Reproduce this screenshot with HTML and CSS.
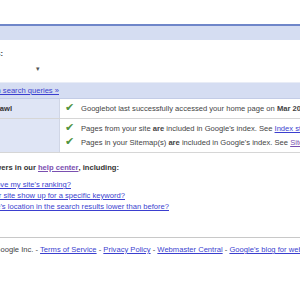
FILE: index.html
```
<!DOCTYPE html>
<html lang="en">
<head>
  <meta charset="UTF-8">
  <title>Webmaster Tools - Overview</title>
  <link rel="stylesheet" href="styles.css">
</head>
<body>

<div class="page">
  <div class="masthead"></div>

  <div class="tabs"></div>

  <div class="queries">
    <div class="clip-end queries-label">Top queries:</div>
    <div class="queries-select"><span class="arrow">&#9662;</span></div>
  </div>

  <div class="queries-bar">
    <div class="clip-end more-link"><a href="#">Drill down in search queries &raquo;</a></div>
  </div>

  <table class="status">
    <tr>
      <td class="status-label"><div class="clip-end">Last crawl</div></td>
      <td class="status-info">
        <div class="check-line"><span class="check">&#10004;</span>Googlebot last successfully accessed your home page on <b>Mar 20, 2008</b>.</div>
      </td>
    </tr>
    <tr>
      <td class="status-label"></td>
      <td class="status-info">
        <div class="check-line"><span class="check">&#10004;</span>Pages from your site <b>are</b> included in Google's index. See <a href="#">Index stats</a>.</div>
        <div class="check-line"><span class="check">&#10004;</span>Pages in your Sitemap(s) <b>are</b> included in Google's index. See <a href="#" class="visited">Sitemaps</a>.</div>
      </td>
    </tr>
  </table>

  <div class="clip-end help-intro">Find answers in our&nbsp;<a href="#" class="visited">help center</a>, including:</div>
  <ul class="faq">
    <li class="clip-end"><a href="#">How can I improve my site's ranking?</a></li>
    <li class="clip-end"><a href="#">Why doesn't your site show up for a specific keyword?</a></li>
    <li class="clip-end"><a href="#">Why is my site's location in the search results lower than before?</a></li>
  </ul>

  <div class="footer">
    &copy;2008 Google Inc. - <a href="#">Terms of Service</a> - <a href="#">Privacy Policy</a> - <a href="#">Webmaster Central</a> - <a href="#">Google's blog for webmasters</a>
  </div>
</div>

</body>
</html>
```

FILE: styles.css
```
body {
  margin: 0;
  background: #fff;
  font-family: 'Liberation Sans', Arial, sans-serif;
  font-size: 7.6px;
  color: #444;
  overflow: hidden;
}

a {
  color: #3b3fcf;
}

a.visited {
  color: #7a4fb0;
}

.page {
  width: 300px;
  overflow: hidden;
}

/* text whose start lies off the left edge: it ends at the box's right side */
.clip-end {
  display: flex;
  justify-content: flex-end;
  white-space: nowrap;
}

.masthead {
  height: 24px;
}

.tabs {
  height: 14px;
  border-top: 2px solid #6f86c9;
  background: #d5ddf2;
}

.queries {
  height: 42px;
  border-bottom: 1px solid #e8ecf6;
}

.queries-label {
  width: 3px;
  padding-top: 9px;
  font-weight: bold;
  color: #333;
}

.queries-select {
  margin: 7px 0 0 36px;
  width: 10px;
  color: #555;
  font-size: 7px;
}

.queries-bar {
  height: 15px;
  line-height: 15px;
  background: #d5ddf2;
  border-bottom: 1px solid #c3cce6;
}

.more-link {
  width: 59px;
}

.status {
  width: 100%;
  table-layout: fixed;
  border-collapse: collapse;
  border-bottom: 1px solid #bbb;
}

.status td {
  vertical-align: top;
  border-bottom: 1px solid #d6d6d6;
  white-space: nowrap;
  line-height: 13px;
}

.status-label {
  width: 57px;
  background: #dfe5f5;
  border-right: 1px solid #d0d6e6;
  font-weight: bold;
  color: #333;
  padding-top: 3px;
}

.status-label .clip-end {
  width: 11px;
}

.status-info {
  padding: 2px 0 3px 5px;
}

.check-line {
  line-height: 13px;
}

.check {
  display: inline-block;
  width: 16px;
  color: #4f9440;
  font-size: 11px;
}

.help-intro {
  width: 119px;
  margin-top: 9px;
  line-height: 11px;
  font-weight: bold;
  color: #333;
}

.faq {
  list-style: none;
  margin: 6px 0 0;
  padding: 0;
}

.faq li {
  line-height: 11px;
}

.faq li:nth-child(1) {
  width: 71px;
}

.faq li:nth-child(2) {
  width: 125px;
}

.faq li:nth-child(3) {
  width: 169px;
}

.footer {
  margin-top: 25px;
  border-top: 1px solid #c8c8c8;
  padding-top: 7px;
  white-space: nowrap;
  text-indent: -30px;
}
```
